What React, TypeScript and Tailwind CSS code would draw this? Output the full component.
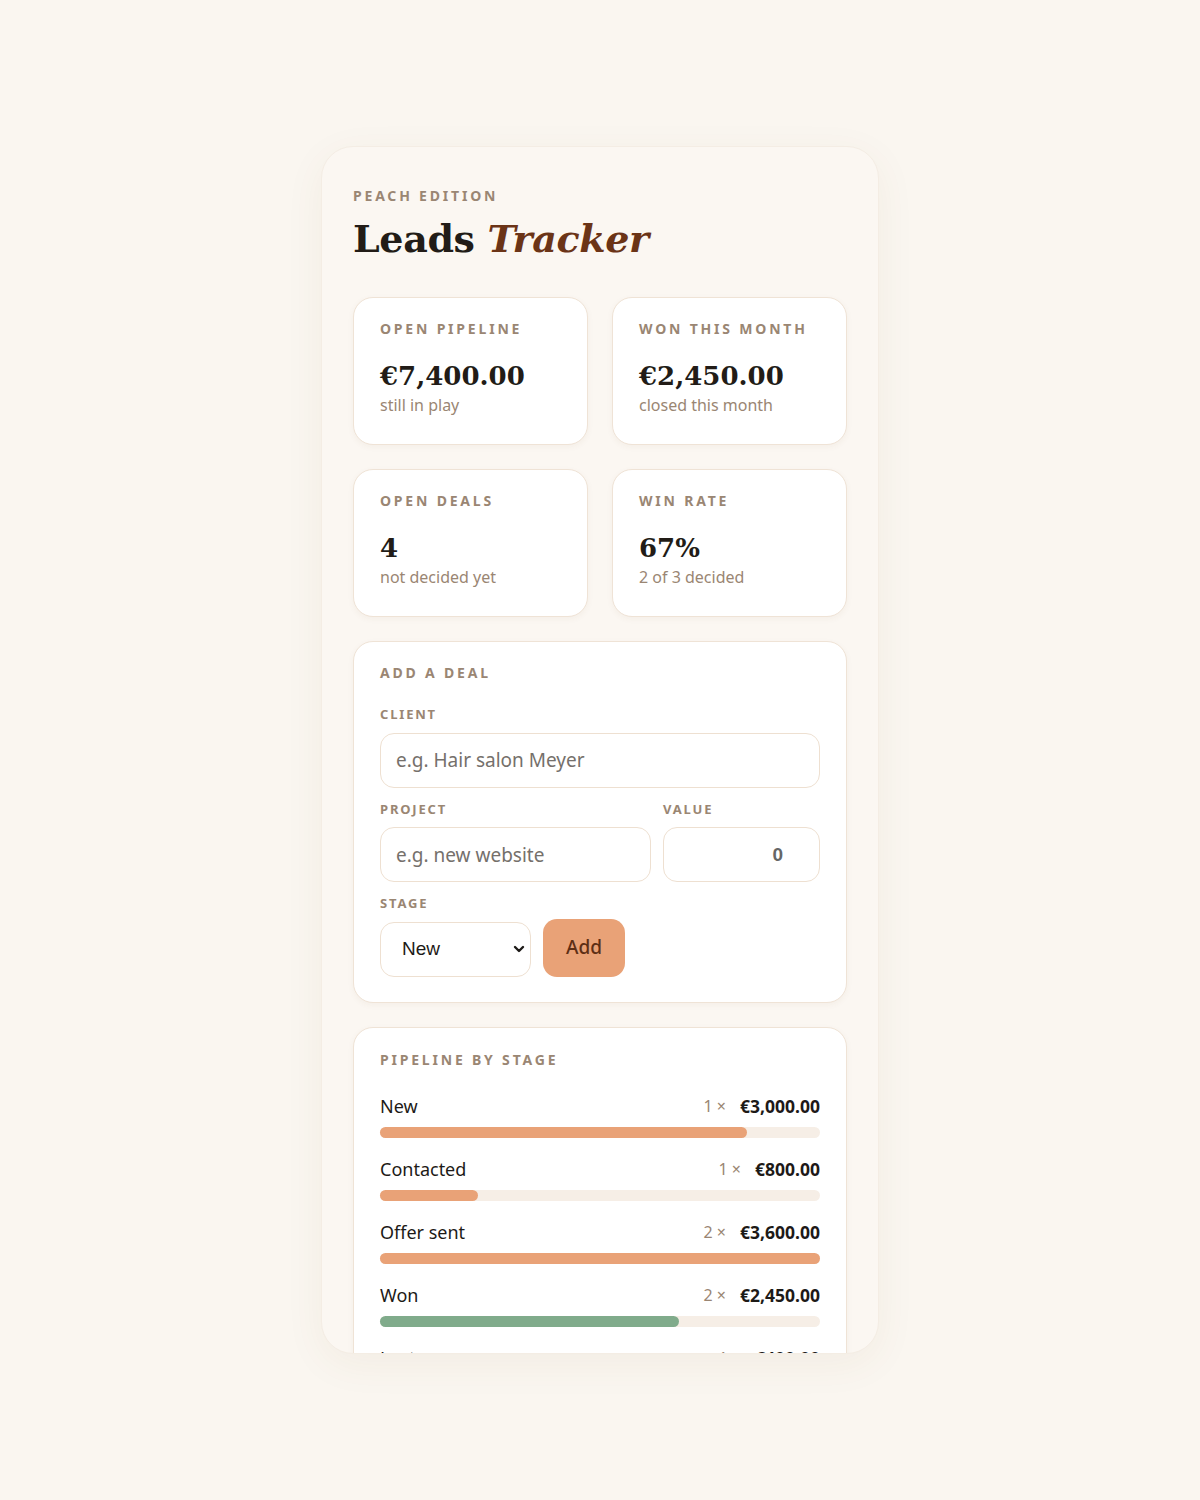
import React from 'react';

/* ── Data ───────────────────────────────────────────────────── */

type Stage = {
  name: string;
  count: number;
  total: number;
  won?: boolean;
};

const stages: Stage[] = [
  { name: 'New', count: 1, total: 3000 },
  { name: 'Contacted', count: 1, total: 800 },
  { name: 'Offer sent', count: 2, total: 3600 },
  { name: 'Won', count: 2, total: 2450, won: true },
  { name: 'Lost', count: 1, total: 400 },
];

const maxTotal = Math.max(...stages.map((s) => s.total));

const euro = (n: number) =>
  '€' + n.toLocaleString('en-US', { minimumFractionDigits: 2, maximumFractionDigits: 2 });

const serif = "font-['Georgia','DejaVu_Serif',serif]";
const sans = "font-['Noto_Sans',sans-serif]";

/* ── Pieces ─────────────────────────────────────────────────── */

const Label = ({ children, small }: { children: React.ReactNode; small?: boolean }) => (
  <p
    className={`font-bold uppercase text-[#9a8673] ${
      small ? 'text-[13px] tracking-[0.14em]' : 'text-[14px] tracking-[0.2em]'
    }`}
  >
    {children}
  </p>
);

const StatCard = ({ label, value, note }: { label: string; value: string; note: string }) => (
  <div className="h-[148px] rounded-[20px] border border-[#efe3d6] bg-white px-[26px] pt-[20px] shadow-[0_2px_6px_rgba(120,80,40,0.05)]">
    <Label>{label}</Label>
    <p className={`${serif} mt-[20px] text-[26px] font-bold leading-[34px] text-[#221c17]`}>{value}</p>
    <p className="text-[16px] leading-[24px] text-[#9a8673]">{note}</p>
  </div>
);

const inputBase =
  'h-[55px] w-full rounded-[14px] border border-[#eee0d1] bg-white px-[15px] text-[19px] outline-none placeholder:text-[#75706b]';

/* ── App ────────────────────────────────────────────────────── */

export default function App() {
  return (
    <div className={`${sans} flex min-h-screen items-center justify-center bg-[#faf6f0]`}>
      <div className="h-[1208px] w-[558px] overflow-hidden rounded-[32px] border border-[#f4ede4] bg-[#fbf7f2] px-[31px] pt-[38px] shadow-[0_10px_40px_rgba(120,80,40,0.06)]">
        <Label>Peach edition</Label>
        <h1 className={`${serif} mt-[9px] text-[38px] font-bold leading-[48px] tracking-[-0.01em] text-[#221c17]`}>
          Leads <em className="text-[#6b3417]">Tracker</em>
        </h1>

        <div className="mt-[34px] grid grid-cols-2 gap-[24px]">
          <StatCard label="Open pipeline" value="€7,400.00" note="still in play" />
          <StatCard label="Won this month" value="€2,450.00" note="closed this month" />
          <StatCard label="Open deals" value="4" note="not decided yet" />
          <StatCard label="Win rate" value="67%" note="2 of 3 decided" />
        </div>

        {/* Add a deal */}
        <div className="mt-[24px] rounded-[20px] border border-[#efe3d6] bg-white px-[26px] pb-[25px] pt-[20px] shadow-[0_2px_6px_rgba(120,80,40,0.05)]">
          <Label>Add a deal</Label>

          <div className="mt-[22px]">
            <Label small>Client</Label>
            <input className={`${inputBase} mt-[8px]`} placeholder="e.g. Hair salon Meyer" />
          </div>

          <div className="mt-[12px] flex gap-[12px]">
            <div className="flex-1">
              <Label small>Project</Label>
              <input className={`${inputBase} mt-[8px]`} placeholder="e.g. new website" />
            </div>
            <div className="w-[157px]">
              <Label small>Value</Label>
              <input
                className={`${inputBase} mt-[8px] text-right font-['Liberation_Sans',sans-serif] font-bold text-[#666] pr-[36px]`}
                defaultValue="0"
              />
            </div>
          </div>

          <div className="mt-[12px]">
            <Label small>Stage</Label>
            <div className="mt-[5px] flex items-end gap-[12px]">
              <div className="relative w-[151px]">
                <select className="h-[55px] w-full appearance-none rounded-[14px] border border-[#eee0d1] bg-white pl-[21px] text-[19px] font-['Liberation_Sans',sans-serif] text-[#1d1a17] outline-none">
                  <option>New</option>
                  <option>Contacted</option>
                  <option>Offer sent</option>
                  <option>Won</option>
                  <option>Lost</option>
                </select>
                <svg
                  className="pointer-events-none absolute right-[6px] top-[21px] h-[12px] w-[12px]"
                  viewBox="0 0 12 12"
                  fill="none"
                  stroke="#1d1a17"
                  strokeWidth="2.4"
                  strokeLinecap="round"
                  strokeLinejoin="round"
                >
                  <path d="M2 4l4 4 4-4" />
                </svg>
              </div>
              <button
                type="button"
                className="h-[58px] rounded-[14px] bg-[#e9a277] px-[23px] text-[19px] font-medium text-[#5e2f15]"
              >
                Add
              </button>
            </div>
          </div>
        </div>

        {/* Pipeline */}
        <div className="mt-[24px] rounded-[20px] border border-[#efe3d6] bg-white px-[26px] pb-[25px] pt-[21px] shadow-[0_2px_6px_rgba(120,80,40,0.05)]">
          <Label>Pipeline by stage</Label>
          <div className="mt-[23px] flex flex-col gap-[18px]">
            {stages.map((s) => (
              <div key={s.name}>
                <div className="flex items-center justify-between leading-[26px]">
                  <span className="text-[18px] text-[#1d1a17]">{s.name}</span>
                  <span className="flex items-center gap-[14px]">
                    <span className="text-[16px] text-[#9a8673]">{s.count} ×</span>
                    <span className="text-[17.5px] font-bold text-[#1d1a17]">{euro(s.total)}</span>
                  </span>
                </div>
                <div className="mt-[8px] h-[11px] rounded-full bg-[#f6eee6]">
                  <div
                    className={`h-full rounded-full ${s.won ? 'bg-[#80ab8b]' : 'bg-[#e9a277]'}`}
                    style={{ width: `${(s.total / maxTotal) * 100}%` }}
                  />
                </div>
              </div>
            ))}
          </div>
        </div>
      </div>
    </div>
  );
}
